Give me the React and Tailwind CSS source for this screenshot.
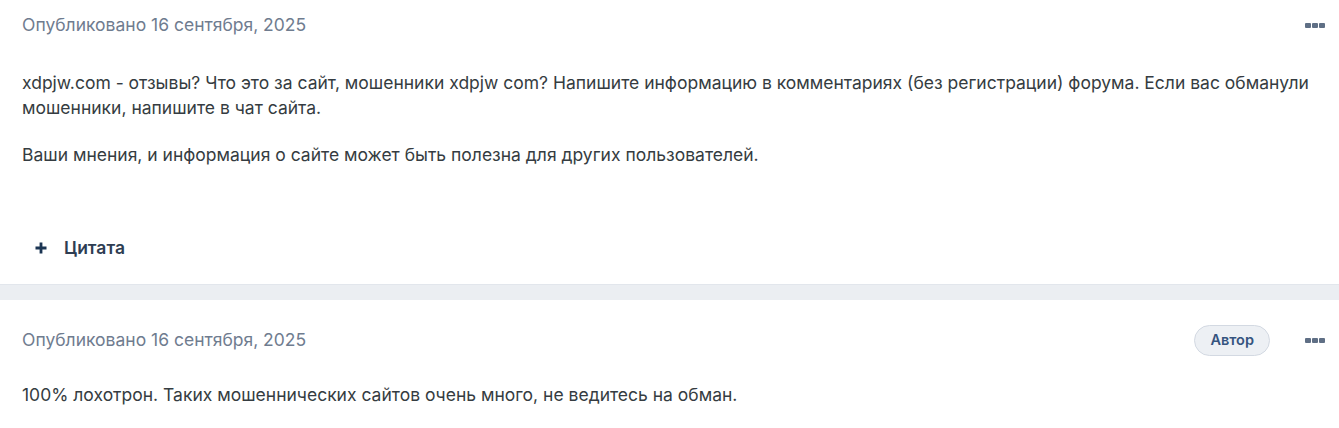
import React from "react";

function Dots() {
  return (
    <button className="flex items-center gap-[1px]">
      <span className="block w-[6px] h-[5px] rounded-[1px] bg-[#5f6f85]" />
      <span className="block w-[6px] h-[5px] rounded-[1px] bg-[#5f6f85]" />
      <span className="block w-[6px] h-[5px] rounded-[1px] bg-[#5f6f85]" />
    </button>
  );
}

export default function App() {
  return (
    <div className="w-[1339px] bg-white text-[17.5px] text-[#353c41]" style={{ fontFamily: "Inter, 'Noto Sans', sans-serif" }}>
      <div className="pl-[22px] pr-[14px]">
        <div className="flex items-center justify-between h-[50px]">
          <span className="text-[#6f7c8f]">Опубликовано 16 сентября, 2025</span>
          <Dots />
        </div>
        <div className="pt-[20px] leading-[25px]">
          <p>xdpjw.com - отзывы? Что это за сайт, мошенники xdpjw com? Напишите информацию в комментариях (без регистрации) форума. Если вас обманули мошенники, напишите в чат сайта.</p>
          <p className="mt-[22px]">Ваши мнения, и информация о сайте может быть полезна для других пользователей.</p>
        </div>
        <div className="flex items-center gap-[17px] pl-[13px] mt-[67px] h-[28px]">
          <svg width="12" height="12" viewBox="0 0 12 12">
            <path d="M6 0.5v11M0.5 6h11" stroke="#1b3553" strokeWidth="2.8" />
          </svg>
          <span className="font-semibold text-[#2e3d52]">Цитата</span>
        </div>
      </div>
      <div className="mt-[22px] h-[16px] bg-[#ebeef2] border-t border-[#e2e6ec]" />
      <div className="pl-[22px] pr-[14px]">
        <div className="flex items-center justify-between h-[80px]">
          <span className="text-[#6f7c8f]">Опубликовано 16 сентября, 2025</span>
          <div className="flex items-center gap-[35px]">
            <span className="px-[15px] h-[31px] flex items-center rounded-full bg-[#edf0f4] border border-[#d3d9e2] text-[14.5px] font-semibold text-[#35547f]">Автор</span>
            <Dots />
          </div>
        </div>
        <p className="leading-[25px] pt-[2px]">100% лохотрон. Таких мошеннических сайтов очень много, не ведитесь на обман.</p>
      </div>
    </div>
  );
}
